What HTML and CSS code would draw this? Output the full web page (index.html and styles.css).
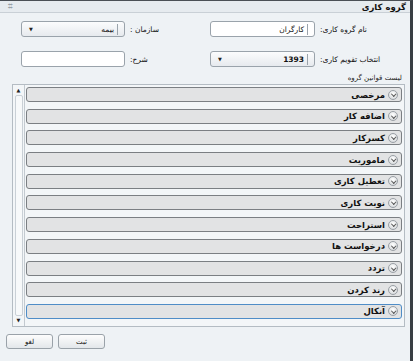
FILE: index.html
```html
<!DOCTYPE html>
<html lang="fa">
<head>
<meta charset="utf-8">
<title>گروه کاری</title>
<link rel="stylesheet" href="styles.css">
</head>
<body>
<div class="window">
  <div class="titlebar">
    <span class="grip">⌗</span>
    <span class="title">گروه کاری</span>
  </div>
  <div class="form">
    <div class="field select"><span class="arrow">▼</span><span class="val">بیمه</span></div>
    <label class="lbl">سازمان :</label>
    <div class="field"><span class="val">کارگران</span></div>
    <label class="lbl">نام گروه کاری:</label>
    <div class="field"></div>
    <label class="lbl">شرح:</label>
    <div class="field select"><span class="arrow">▼</span><span class="val num">1393</span></div>
    <label class="lbl">انتخاب تقویم کاری:</label>
  </div>
  <div class="listcap">لیست قوانین گروه</div>
  <div class="listbox">
    <div class="scroll">
      <span class="sbtn">▲</span>
      <span class="thumb"></span>
      <span class="sbtn">▼</span>
    </div>
    <div class="rows">
      <div class="row"><span class="ico"></span><span class="rtxt">مرخصی</span></div>
      <div class="row"><span class="ico"></span><span class="rtxt">اضافه کار</span></div>
      <div class="row"><span class="ico"></span><span class="rtxt">کسرکار</span></div>
      <div class="row"><span class="ico"></span><span class="rtxt">ماموریت</span></div>
      <div class="row"><span class="ico"></span><span class="rtxt">تعطیل کاری</span></div>
      <div class="row"><span class="ico"></span><span class="rtxt">نوبت کاری</span></div>
      <div class="row"><span class="ico"></span><span class="rtxt">استراحت</span></div>
      <div class="row"><span class="ico"></span><span class="rtxt">درخواست ها</span></div>
      <div class="row"><span class="ico"></span><span class="rtxt">تردد</span></div>
      <div class="row"><span class="ico"></span><span class="rtxt">رند کردن</span></div>
      <div class="row focus"><span class="ico"></span><span class="rtxt">آنکال</span></div>
    </div>
  </div>
  <div class="buttons">
    <button class="btn">لغو</button>
    <button class="btn">ثبت</button>
  </div>
</div>
</body>
</html>
```
FILE: styles.css
```css
* { box-sizing: border-box; }
html, body { margin: 0; padding: 0; }
body {
  width: 413px;
  height: 361px;
  overflow: hidden;
  background: #eef2f5;
  font-family: "DejaVu Sans", Tahoma, sans-serif;
  color: #111;
}
.window {
  width: 413px;
  height: 361px;
  border-top: 1px solid #4a4f55;
  border-right: 3px solid #3a3f44;
  background: #eef2f5;
  display: flex;
  flex-direction: column;
}
.titlebar {
  height: 12px;
  background: #e6ebef;
  border-bottom: 1px solid #c9d0d6;
  display: flex;
  align-items: center;
  justify-content: space-between;
  padding: 0 4px 0 8px;
}
.grip { font-size: 8px; color: #9aa2a9; line-height: 1; }
.title { font-size: 8.5px; font-weight: bold; direction: rtl; }
.form {
  margin-top: 8px;
  display: grid;
  grid-template-columns: 104px 85px 105px 1fr;
  grid-auto-rows: 16px;
  row-gap: 14px;
  padding-left: 21px;
}
.field {
  border: 1px solid #9aa3ab;
  border-radius: 3px;
  background: #fff;
  display: flex;
  align-items: center;
  padding: 0 6px 0 7px;
  direction: ltr;
}
.field .val {
  margin-left: auto;
  font-size: 7.5px;
  direction: rtl;
  border-right: 1px solid #9aa3ab;
  padding-right: 3px;
  line-height: 11px;
}
.field .num { font-weight: bold; }
.select {
  background: linear-gradient(#fbfcfd, #e6eaee);
}
.arrow { font-size: 5px; color: #222; }
.lbl {
  font-size: 7.5px;
  direction: rtl;
  padding-left: 5px;
  display: flex;
  align-items: center;
  justify-content: flex-end;
  white-space: nowrap;
}
.listcap {
  margin-top: 7px;
  direction: rtl;
  font-size: 7px;
  color: #222;
  padding-right: 8px;
  line-height: 9px;
}
.listbox {
  margin: 1px 5px 0 12px;
  height: 243px;
  border: 1px solid #b4bcc3;
  background: #f3f6f8;
  display: flex;
}
.scroll {
  width: 12px;
  border-right: 1px solid #c3cad0;
  display: flex;
  flex-direction: column;
  align-items: center;
  padding: 1px 0;
}
.sbtn { font-size: 5px; line-height: 9px; color: #222; }
.thumb {
  flex: 1;
  width: 8px;
  border: 1px solid #c9d0d6;
  border-radius: 2px;
  background: #f7f9fa;
}
.rows {
  flex: 1;
  padding: 2px 2px 0 1px;
  display: flex;
  flex-direction: column;
  gap: 6.7px;
}
.row {
  height: 15px;
  border: 1.5px solid #7b7f83;
  border-radius: 3px;
  background: #e2e3e4;
  display: flex;
  direction: rtl;
  align-items: center;
  padding-right: 3px;
}
.row.focus { border-color: #4f8dc7; }
.ico {
  width: 10px;
  height: 10px;
  border-radius: 50%;
  border: 1px solid #9aa0a6;
  background: radial-gradient(circle at 50% 35%, #ffffff, #cfd3d6);
  position: relative;
  margin-left: 3px;
}
.ico::after {
  content: "";
  position: absolute;
  left: 2.5px;
  top: 1.5px;
  width: 2.5px;
  height: 2.5px;
  border-right: 1.3px solid #555;
  border-bottom: 1.3px solid #555;
  transform: rotate(45deg);
}
.rtxt { font-size: 8.5px; font-weight: bold; }
.buttons {
  margin-top: 7px;
  padding-left: 6px;
  display: flex;
  gap: 5px;
  direction: ltr;
}
.btn {
  width: 47px;
  height: 15px;
  border: 1px solid #9aa2a9;
  border-radius: 3px;
  background: linear-gradient(#fdfdfd, #e3e7ea);
  font-family: "DejaVu Sans", sans-serif;
  font-size: 7px;
  padding: 0;
  color: #111;
}
```
